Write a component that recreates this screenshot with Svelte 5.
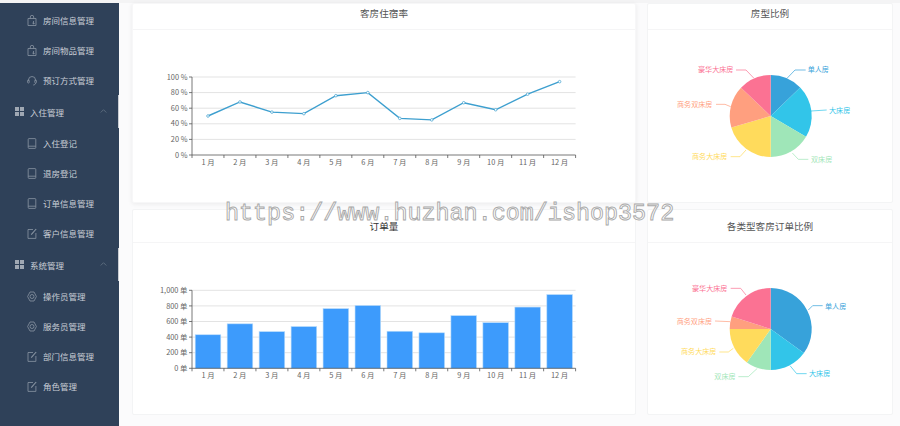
<script>
  const months = ['1 月','2 月','3 月','4 月','5 月','6 月','7 月','8 月','9 月','10 月','11 月','12 月'];
  const x0 = 192, x1 = 575.6, band = (x1 - x0) / 12;
  const ticks = [0, 1, 2, 3, 4, 5];
  const lineData = [50, 68, 55, 53, 76, 80, 47, 45, 67, 58, 78, 94];
  const barData = [430, 570, 470, 535, 765, 805, 475, 455, 675, 585, 785, 945];
  const ly = (v) => 155 - v * 0.78;
  const by = (v) => 368.3 - v * 0.078;
  const linePts = lineData.map((v, i) => [x0 + band * (i + 0.5), ly(v)]);
  const linePath = linePts.map((p) => p.join(',')).join(' ');
  const colors = ['#37a2da', '#32c5e9', '#9fe6b8', '#ffdb5c', '#ff9f7f', '#fb7293'];
  function slices(cx, cy, r, stops) {
    return colors.map((color, i) => {
      const a = ((stops[i] - 90) * Math.PI) / 180;
      const b = ((stops[i + 1] - 90) * Math.PI) / 180;
      const large = stops[i + 1] - stops[i] > 180 ? 1 : 0;
      return {
        color,
        d: `M${cx} ${cy}L${cx + r * Math.cos(a)} ${cy + r * Math.sin(a)}A${r} ${r} 0 ${large} 1 ${cx + r * Math.cos(b)} ${cy + r * Math.sin(b)}Z`
      };
    });
  }
  const zx = (v) => 640 + v / 3;
  const pts = (list, base) => list.map(([x, y]) => `${zx(x)},${base + y / 3}`).join(' ');
  const pie1 = slices(770.7, 116, 41, [0, 46, 120.5, 180, 253.8, 313.6, 360]);
  const pie2 = slices(770.7, 329, 41, [0, 126, 180, 215.5, 270, 287.7, 360]);
  const labels1 = [
    { t: '单人房', x: 807.7, y: 69.5, c: colors[0], l: [[441, 235], [465, 210], [497, 210]] },
    { t: '大床房', x: 829, y: 110, c: colors[1], l: [[513, 333], [560, 330]] },
    { t: '双床房', x: 811, y: 159, c: colors[2], l: [[457, 459], [475, 478], [505, 478]] },
    { t: '商务大床房', x: 692, y: 156.5, c: colors[3], l: [[318, 450], [300, 470], [272, 470]] },
    { t: '商务双床房', x: 677, y: 104.5, c: colors[4], l: [[272, 320], [255, 313], [228, 313]] },
    { t: '豪华大床房', x: 698, y: 69.5, c: colors[5], l: [[342, 235], [318, 210], [288, 210]] }
  ];
  const labels2 = [
    { t: '单人房', x: 825, y: 306, c: colors[0], l: [[505, 315], [518, 302], [548, 302]] },
    { t: '大床房', x: 809, y: 373.5, c: colors[1], l: [[450, 482], [470, 506], [500, 506]] },
    { t: '双床房', x: 714.3, y: 376.5, c: colors[2], l: [[352, 490], [325, 515], [295, 515]] },
    { t: '商务大床房', x: 681, y: 351.5, c: colors[3], l: [[280, 430], [265, 441], [238, 441]] },
    { t: '商务双床房', x: 676.7, y: 321, c: colors[4], l: [[270, 350], [225, 348]] },
    { t: '豪华大床房', x: 692, y: 288, c: colors[5], l: [[318, 270], [302, 250], [272, 250]] }
  ];
  const menu = [
    { t: '房间信息管理', i: 'bag' },
    { t: '房间物品管理', i: 'bag' },
    { t: '预订方式管理', i: 'headset' },
    { t: '入住管理', group: true },
    { t: '入住登记', i: 'phone' },
    { t: '退房登记', i: 'phone' },
    { t: '订单信息管理', i: 'phone' },
    { t: '客户信息管理', i: 'edit' },
    { t: '系统管理', group: true },
    { t: '操作员管理', i: 'gear' },
    { t: '服务员管理', i: 'gear' },
    { t: '部门信息管理', i: 'edit' },
    { t: '角色管理', i: 'edit' }
  ];
</script>

{#snippet icon(name)}
  <svg class="ico" width="10" height="11" viewBox="0 0 10 11" fill="none" stroke="#8a95a3" stroke-width="0.8">
    {#if name === 'bag'}
      <path d="M1 3.5h8v7H1z M3.3 3.5V2a1.7 1.7 0 0 1 3.4 0v1.5" />
      <path d="M6.5 6v3M5.4 8l1.1 1.1L7.6 8" />
    {:else if name === 'headset'}
      <path d="M1.5 6V5a3.5 3.5 0 0 1 7 0v1" />
      <rect x="0.6" y="5" width="1.6" height="3" rx="0.6" />
      <rect x="7.8" y="5" width="1.6" height="3" rx="0.6" />
      <path d="M8.6 8c0 1.2-1 2-2.4 2" />
    {:else if name === 'phone'}
      <rect x="1.2" y="0.6" width="7.6" height="9.8" rx="0.8" />
      <path d="M1.2 8.2h7.6" />
    {:else if name === 'edit'}
      <path d="M6 1.5H1v8.9h7.9V5" />
      <path d="M4.2 6.6 9.2 1" stroke-width="1.1" />
    {:else}
      <path d="M3 1h4l2.4 4.5L7 10H3L.6 5.5z" />
      <circle cx="5" cy="5.5" r="2" />
    {/if}
  </svg>
{/snippet}

{#snippet pie(list, labels, base)}
  {#each list as s}
    <path d={s.d} fill={s.color} />
  {/each}
  {#each labels as l}
    <polyline points={pts(l.l, base)} fill="none" stroke={l.c} stroke-width="0.7" />
    <text class="plabel" x={l.x} y={l.y + 2.6} fill={l.c}>{l.t}</text>
  {/each}
{/snippet}

<div class="page">
  <aside class="side">
    {#each menu as m}
      {#if m.group}
        <div class="group">
          <span class="grid"><i></i><i></i><i></i><i></i></span>
          <span>{m.t}</span>
          <svg class="chev" width="7" height="4" viewBox="0 0 7 4" fill="none" stroke="#6f7c8d" stroke-width="0.7"><path d="M.7 3.5 3.5.7l2.8 2.8" /></svg>
        </div>
      {:else}
        <div class="item">
          {@render icon(m.i)}
          <span>{m.t}</span>
        </div>
      {/if}
    {/each}
  </aside>

  <main class="main">
    <section class="card raised">
      <h3 class="title short">客房住宿率</h3>
      <svg class="chart" width="502" height="172" viewBox="133 30 502 172">
        {#each ticks as t}
          {@const y = ly(t * 20)}
          {#if t > 0}<line x1={x0} x2={x1} y1={y} y2={y} class="grid-line" />{/if}
          <line x1={x0 - 3} x2={x0} y1={y} y2={y} class="axis" />
          <text class="tick" x={x0 - 4.5} y={y + 2.6} text-anchor="end">{t * 20} %</text>
        {/each}
        <line x1={x0} x2={x0} y1="77" y2="155" class="axis" />
        <line x1={x0} x2={x1} y1="155" y2="155" class="axis" />
        {#each months as m, i}
          <line x1={x0 + band * i} x2={x0 + band * i} y1="155" y2="158" class="axis" />
          <text class="tick" x={x0 + band * (i + 0.5)} y="165" text-anchor="middle">{m}</text>
        {/each}
        <line x1={x1} x2={x1} y1="155" y2="158" class="axis" />
        <polyline points={linePath} fill="none" stroke="#3d9fcf" stroke-width="1.4" />
        {#each linePts as p}
          <circle cx={p[0]} cy={p[1]} r="1.3" fill="#fff" stroke="#3d9fcf" stroke-width="0.7" />
        {/each}
      </svg>
    </section>

    <section class="card">
      <h3 class="title short">房型比例</h3>
      <svg class="chart" width="244" height="172" viewBox="648 30 244 172">
        {@render pie(pie1, labels1, 0)}
      </svg>
    </section>

    <section class="card">
      <h3 class="title dark">订单量</h3>
      <svg class="chart" width="502" height="171" viewBox="133 243 502 171">
        {#each ticks as t}
          {@const y = by(t * 200)}
          {#if t > 0}<line x1={x0} x2={x1} y1={y} y2={y} class="grid-line" />{/if}
          <line x1={x0 - 3} x2={x0} y1={y} y2={y} class="axis" />
          <text class="tick" x={x0 - 4.5} y={y + 2.6} text-anchor="end">{(t * 200).toLocaleString('en-US')} 单</text>
        {/each}
        {#each barData as v, i}
          <rect class="bar" x={x0 + band * i + 3.2} y={by(v)} width="25.6" height={368.3 - by(v)} />
        {/each}
        <line x1={x0} x2={x0} y1="290.3" y2="368.3" class="axis" />
        <line x1={x0} x2={x1} y1="368.3" y2="368.3" class="axis" />
        {#each months as m, i}
          <line x1={x0 + band * i} x2={x0 + band * i} y1="368.3" y2="371.3" class="axis" />
          <text class="tick" x={x0 + band * (i + 0.5)} y="378" text-anchor="middle">{m}</text>
        {/each}
        <line x1={x1} x2={x1} y1="368.3" y2="371.3" class="axis" />
      </svg>
    </section>

    <section class="card">
      <h3 class="title">各类型客房订单比例</h3>
      <svg class="chart" width="244" height="171" viewBox="648 243 244 171">
        {@render pie(pie2, labels2, 205)}
      </svg>
    </section>
  </main>

  <div class="watermark">https://www.huzhan.com/ishop3572</div>
</div>

<style>
  :global(body) {
    margin: 0;
    background: #fff;
  }
  .page {
    position: relative;
    display: flex;
    width: 900px;
    height: 426px;
    overflow: hidden;
    padding-top: 3px;
    box-sizing: border-box;
    background: #f4f4f5;
    will-change: opacity;
    font-family: "Noto Sans CJK SC", "Liberation Sans", sans-serif;
  }
  .side {
    flex: none;
    width: 119px;
    padding-top: 2px;
    box-sizing: border-box;
    background: #2f4159;
    color: #c9ced6;
    font-size: 8.5px;
  }
  .item {
    display: flex;
    align-items: center;
    gap: 6px;
    height: 30px;
    padding-left: 27px;
  }
  .group {
    display: flex;
    align-items: center;
    gap: 3px;
    height: 33px;
    padding-left: 15px;
    box-sizing: border-box;
    border-right: 1px solid #c9cdd3;
    position: relative;
  }
  .ico { flex: none; }
  .grid {
    display: grid;
    grid-template-columns: 4px 4px;
    grid-auto-rows: 4px;
    gap: 1px;
    width: 9px;
    margin-right: 3px;
  }
  .grid i { background: #a0a8b3; }
  .chev {
    position: absolute;
    left: 100px;
    top: 14px;
  }
  .main {
    flex: 1;
    display: grid;
    grid-template-columns: 504px 246px;
    grid-template-rows: 200px 206px;
    align-content: start;
    column-gap: 11px;
    row-gap: 6px;
    padding-left: 13px;
    background: #fbfbfc;
  }
  .card {
    box-sizing: border-box;
    border: 1px solid #f3f4f5;
    border-radius: 2px;
    background: #fff;
    min-width: 0;
  }
  .raised {
    border-color: #f7f7f8;
    box-shadow: 0 1px 5px rgba(0, 0, 0, 0.07);
  }
  .title {
    box-sizing: border-box;
    height: 33px;
    margin: 0;
    border-bottom: 1px solid #f5f5f6;
    text-align: center;
    font-size: 9.6px;
    font-weight: 400;
    line-height: 32px;
    color: #555;
  }
  .title.short {
    height: 26px;
    line-height: 18px;
  }
  .title.dark { color: #333; }
  .chart { display: block; }
  .grid-line { stroke: #e3e3e3; stroke-width: 1; }
  .axis { stroke: #555; stroke-width: 0.8; }
  .tick {
    font-size: 7.4px;
    fill: #666;
  }
  .plabel { font-size: 7.1px; }
  .bar {
    fill: #3d9bfc;
    stroke: #b9dcfb;
    stroke-width: 0.6;
  }
  .watermark {
    position: absolute;
    left: 225px;
    top: 199px;
    font-family: "Liberation Mono", monospace;
    font-size: 23.4px;
    line-height: 30px;
    white-space: nowrap;
    color: rgba(255, 255, 255, 0.75);
    -webkit-text-stroke: 0.9px #a8a8a8;
  }
</style>
